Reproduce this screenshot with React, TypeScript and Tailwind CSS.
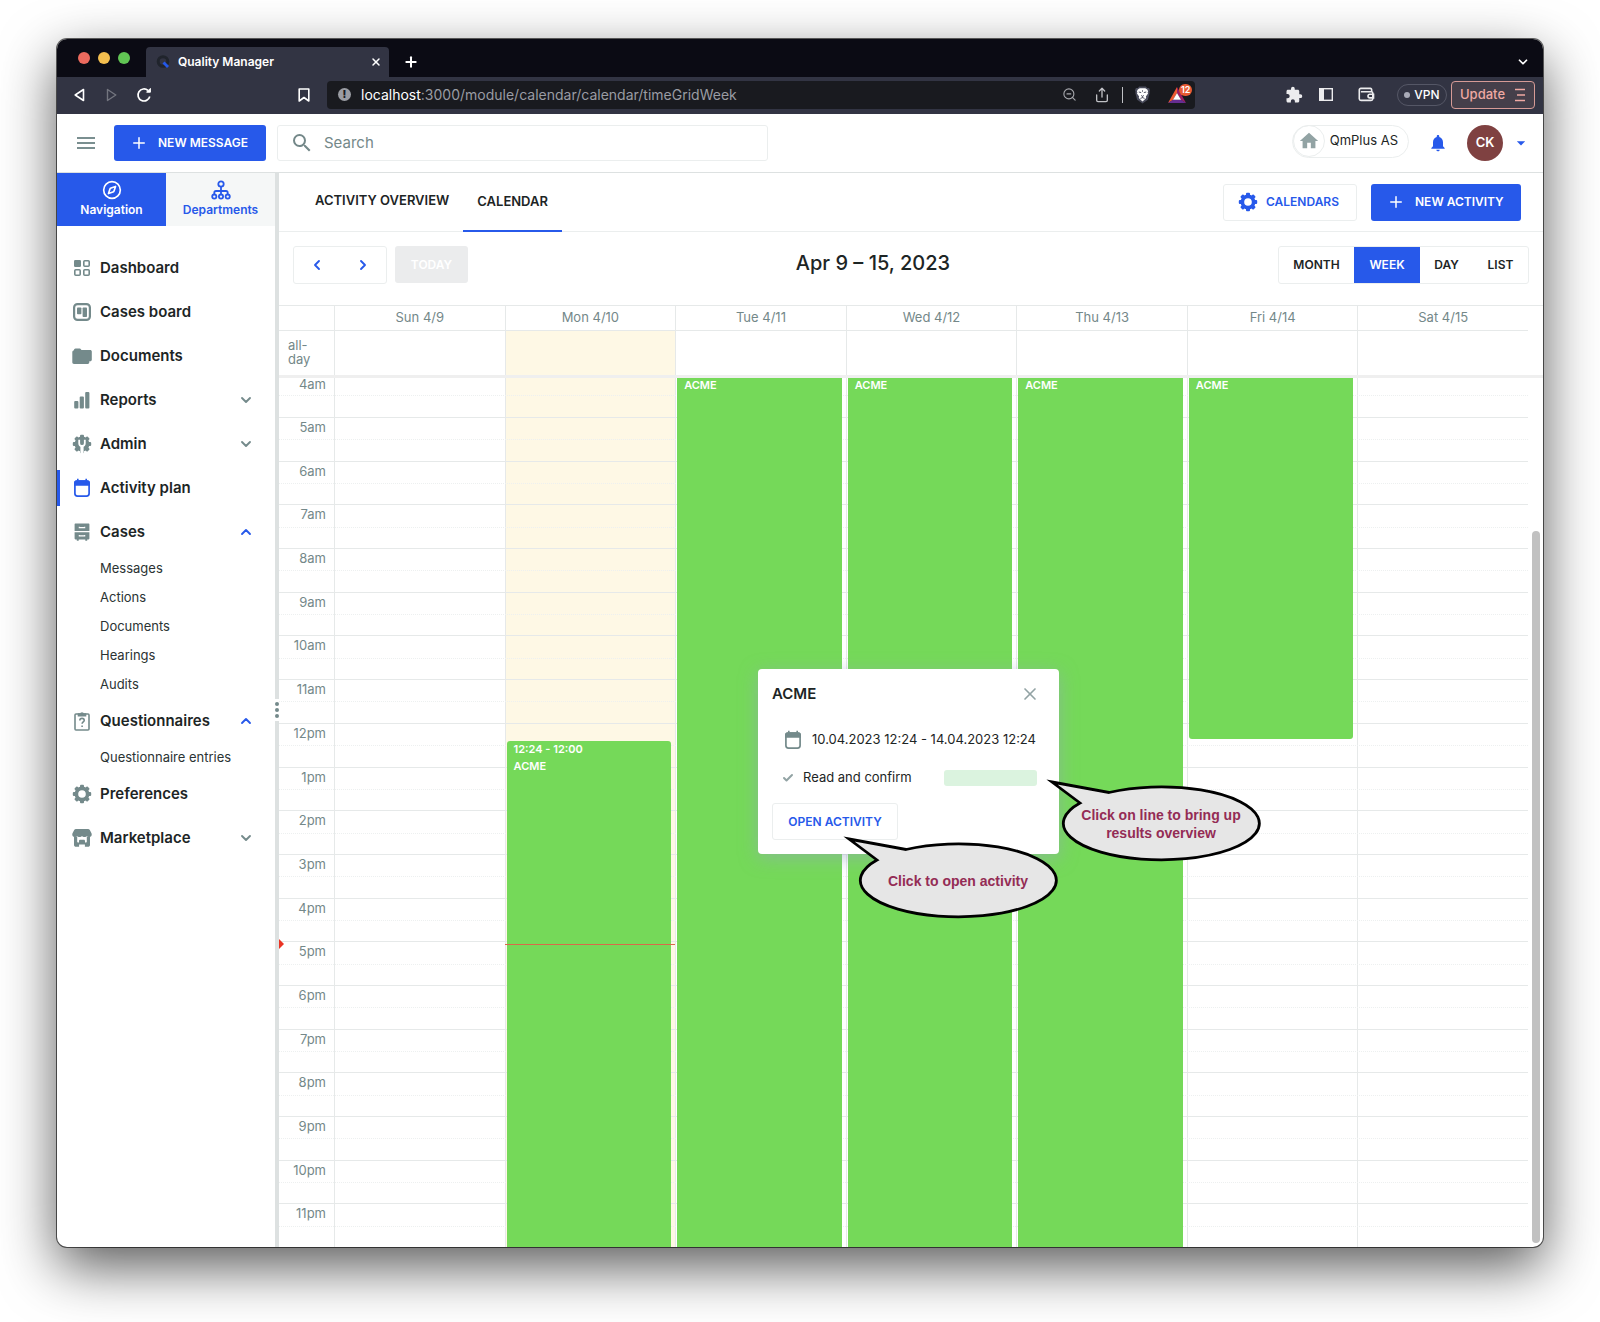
import React from 'react';
import { ChevronDown, ChevronLeft, ChevronRight, ChevronUp, Plus, X, Compass, Share, ZoomOut, Check } from 'lucide-react';
import { MdExtension, MdHome, MdNotifications, MdArrowDropDown, MdSearch } from 'react-icons/md';

type IconProps = { className?: string };

const DashboardIcon = ({ className }: IconProps) => (
  <svg viewBox="0 0 20 20" className={className} fill="none" stroke="currentColor" strokeWidth="1.6">
    <rect x="2" y="2" width="7" height="7" rx="1.2" fill="currentColor" stroke="none" />
    <rect x="11.8" y="2.8" width="5.4" height="5.4" rx="1" />
    <rect x="2.8" y="11.8" width="5.4" height="5.4" rx="1" />
    <rect x="11.8" y="11.8" width="5.4" height="5.4" rx="1" />
  </svg>
);

const BoardIcon = ({ className }: IconProps) => (
  <svg viewBox="0 0 20 20" className={className} fill="currentColor">
    <rect x="2.1" y="2.1" width="15.8" height="15.8" rx="3.4" fill="none" stroke="currentColor" strokeWidth="2.2" />
    <rect x="5" y="5.4" width="4.4" height="6.8" rx="0.8" />
    <rect x="10.6" y="5.4" width="4.4" height="9.6" rx="0.8" />
  </svg>
);

const FoldersIcon = ({ className }: IconProps) => (
  <svg viewBox="0 0 20 18" className={className} fill="currentColor">
    <path d="M3.5 1.5h4.6l1.4 1.6h8.7c.9 0 1.6.6 1.6 1.5v8.2c0 .9-.7 1.5-1.6 1.5h-.9v.9c0 1-.7 1.7-1.6 1.7H2c-1 0-1.7-.7-1.7-1.7V5.3c0-1 .6-1.7 1.5-1.7.2-1.2.8-2.1 1.7-2.1z" />
  </svg>
);

const BarsIcon = ({ className }: IconProps) => (
  <svg viewBox="0 0 20 20" className={className} fill="currentColor">
    <rect x="2.2" y="11" width="4.2" height="7.5" rx="1" />
    <rect x="7.7" y="6.5" width="4.2" height="12" rx="1" />
    <rect x="13.2" y="2" width="4.2" height="16.5" rx="1" />
  </svg>
);

const teeth = [0, 45, 90, 135, 180, 225, 270, 315];

const GearIcon = ({ className }: IconProps) => (
  <svg viewBox="0 0 20 20" className={className} fill="currentColor">
    <circle cx="10" cy="10" r="5.6" fill="none" stroke="currentColor" strokeWidth="3.6" />
    {teeth.map((angle) => (
      <rect key={angle} x="8" y=".8" width="4" height="3.4" rx="1" transform={`rotate(${angle} 10 10)`} />
    ))}
  </svg>
);

const AdminIcon = ({ className }: IconProps) => (
  <svg viewBox="0 0 20 20" className={className} fill="currentColor">
    <circle cx="10" cy="10" r="7.4" />
    {teeth.map((angle) => (
      <rect key={angle} x="8" y=".8" width="4" height="3.4" rx="1" transform={`rotate(${angle} 10 10)`} />
    ))}
    <path d="M7.2 5.8v3.4a2.8 2.8 0 0 0 5.6 0V5.800" fill="none" stroke="white" strokeWidth="1.8" />
    <path d="M8.400 11h3.200v9H8.400z" fill="white" />
  </svg>
);

const CalendarIcon = ({ className }: IconProps) => (
  <svg viewBox="0 0 18 20" className={className} fill="currentColor">
    <path d="M4 .8h1.6v2H4zM12.4.8H14v2h-1.6z" />
    <rect x="1.9" y="3.2" width="14.2" height="15" rx="2.6" fill="none" stroke="currentColor" strokeWidth="1.7" />
    <path d="M1 7.800V5a2.700 2.700 0 0 1 2.700-2.700h10.600A2.700 2.700 0 0 1 17 5v2.800z" />
  </svg>
);

const CabinetIcon = ({ className }: IconProps) => (
  <svg viewBox="0 0 18 20" className={className}>
    <path fill="currentColor" d="M2.300 1.500h13.400a.7.7 0 0 1 .7.700V9H1.600V2.200a.7.7 0 0 1 .7-.7zM1.600 10.200h14.800v6.400a.8.8 0 0 1-.8.8h-1.400v1.400h-1.900v-1.400H5.700v1.400H3.800v-1.400H2.400a.8.8 0 0 1-.8-.8z" />
    <path fill="none" stroke="white" strokeWidth="1.1" d="M6.300 4.700v.9h5.400v-.9M6.300 13v.9h5.400V13" />
  </svg>
);

const ClipboardIcon = ({ className }: IconProps) => (
  <svg viewBox="0 0 18 20" className={className} fill="none" stroke="currentColor" strokeWidth="1.6">
    <rect x="2" y="3" width="14" height="16" rx="1" />
    <path d="M5.500 4.600V3h2a1.600 1.600 0 0 1 3 0h2v1.600z" fill="currentColor" />
    <path d="M6.800 9.600c0-1.400 1-2.200 2.200-2.200s2.200.8 2.200 2c0 1.500-2.100 1.700-2.100 3.400M9.100 14.400v1.500" />
  </svg>
);

const StoreIcon = ({ className }: IconProps) => (
  <svg viewBox="0 0 20 19" className={className} fill="currentColor">
    <path d="M4 .5h12c.8 0 1.400.3 1.800 1l1.700 3.300c.7 1.900-.2 3.700-2 3.700-1.200 0-1.900-.5-2.500-1.100-.6.600-1.300 1.100-2.500 1.100S10.600 8 10 7.400C9.400 8 8.700 8.500 7.500 8.500S5.600 8 5 7.400c-.6.600-1.300 1.100-2.500 1.100C.7 8.500-.2 6.700.5 4.800L2.200 1.500C2.600.8 3.200.5 4 .5z" />
    <path d="M2 8h3.200v5.200c0 .5.300.8.800.8h1v-1.500c0-.8.600-1.300 1.300-1.300h3.400c.7 0 1.300.5 1.300 1.300V14h1c.5 0 .8-.3.8-.8V8H18v8.200c0 1.300-.8 2.100-2.100 2.100h-3V16H7.100v2.300h-3C2.800 18.300 2 17.500 2 16.200z" />
  </svg>
);

const DepartmentsIcon = ({ className }: IconProps) => (
  <svg viewBox="0 0 20 20" className={className} fill="none" stroke="currentColor" strokeWidth="1.8">
    <circle cx="10" cy="4" r="2.7" />
    <circle cx="3.3" cy="16.6" r="2.1" />
    <circle cx="10" cy="16.6" r="2.1" />
    <circle cx="16.7" cy="16.6" r="2.1" />
    <path d="M10 6.700v7.800M3.300 14.500v-1.800c0-1 .6-1.700 1.700-1.700h10c1.100 0 1.700.7 1.700 1.700v1.800" />
  </svg>
);

const WalletIcon = ({ className }: IconProps) => (
  <svg viewBox="0 0 18 16" className={className} fill="none" stroke="currentColor" strokeWidth="1.7">
    <path d="M14.500 5V2.800c0-.8-.5-1.300-1.300-1.300H3A1.700 1.700 0 0 0 1.300 3.200v9.300c0 1.100.7 1.800 1.800 1.800h10.800c1.100 0 1.800-.7 1.800-1.800V6.400c0-.9-.6-1.400-1.500-1.400H3" />
    <path d="M16.500 7.800h-4a1.900 1.900 0 0 0 0 3.800h4z" />
  </svg>
);

const LionIcon = ({ className }: IconProps) => (
  <svg viewBox="0 0 16 18" className={className}>
    <path fill="#4a4c5c" d="M4.500 0h7l1.500 1.500 2-.1L16 4l-.6 1.500.3 1.200-2 7.300L8 18l-5.700-4L.3 6.700l.3-1.200L0 4l1-2.600 2 .1z" />
    <path fill="white" d="M5 1.800h6l2 1.200 1 2-.6 1.300.5 1.200-2.300 3.200.4 1.500L8 15.800l-4-3.600.4-1.500L2.100 7.500l.5-1.200L2 5l1-2z" />
    <path fill="none" stroke="#4a4c5c" strokeWidth="1" d="M4 5.800l2.600.6M12 5.800l-2.600.6M8 4v1.500M6.500 9.500l1.500.9 1.500-.9M8 10.400v1.500M5.800 12.600L8 11.800l2.200.8" />
  </svg>
);

const Bubble = ({ className, children }: { className: string; children: React.ReactNode }) => (
  <div className={`absolute h-[88px] w-[220px] ${className}`}>
    <svg viewBox="0 0 220 88" className="absolute inset-0">
      <path d="M9 6 L66 16.500 A98 36.500 0 1 1 37 27 Z" fill="#e6e6e6" stroke="black" strokeWidth="2.8" strokeMiterlimit="10" />
    </svg>
    <div className="relative flex h-full items-center justify-center pt-2 pl-4 text-center font-['Liberation_Sans',sans-serif] text-sm leading-[18px] font-bold text-[#942c55]">
      <p>{children}</p>
    </div>
  </div>
);

const navItems = [
  { label: 'Dashboard', icon: DashboardIcon },
  { label: 'Cases board', icon: BoardIcon },
  { label: 'Documents', icon: FoldersIcon },
  { label: 'Reports', icon: BarsIcon, open: false },
  { label: 'Admin', icon: AdminIcon, open: false },
  { label: 'Activity plan', icon: CalendarIcon, active: true },
  { label: 'Cases', icon: CabinetIcon, open: true, children: ['Messages', 'Actions', 'Documents', 'Hearings', 'Audits'] },
  { label: 'Questionnaires', icon: ClipboardIcon, open: true, children: ['Questionnaire entries'] },
  { label: 'Preferences', icon: GearIcon },
  { label: 'Marketplace', icon: StoreIcon, open: false },
];

const days = ['Sun 4/9', 'Mon 4/10', 'Tue 4/11', 'Wed 4/12', 'Thu 4/13', 'Fri 4/14', 'Sat 4/15'];

const hours = [
  '5am', '6am', '7am', '8am', '9am', '10am', '11am', '12pm', '1pm', '2pm',
  '3pm', '4pm', '5pm', '6pm', '7pm', '8pm', '9pm', '10pm', '11pm',
];

const BrowserChrome = () => (
  <div className="text-white">
    <div className="flex h-[38px] items-center bg-[#0b0b14] px-[21px]">
      <div className="flex gap-2">
        <span className="size-3 rounded-full bg-[#ec6a5e]" />
        <span className="size-3 rounded-full bg-[#f4bf4f]" />
        <span className="size-3 rounded-full bg-[#61c554]" />
      </div>
      <div className="mt-2 ml-4 flex h-[30px] w-[243px] items-center rounded-t bg-[#323443] pr-[7px] pl-2.5">
        <svg viewBox="0 0 14 14" className="size-[14px]" fill="none">
          <circle cx="7" cy="6.500" r="4.800" stroke="#20242c" strokeWidth="3" />
          <path d="M7.500 7.500l4.500 4.500" stroke="#2458ea" strokeWidth="2.800" />
        </svg>
        <span className="ml-2 text-[12px] font-semibold">Quality Manager</span>
        <button aria-label="Close tab" className="ml-auto"><X className="size-3" strokeWidth={3} /></button>
      </div>
      <button aria-label="New tab" className="mt-2 ml-3.5"><Plus className="size-4" strokeWidth={3} /></button>
      <button aria-label="Tabs" className="mt-2 -mr-2 ml-auto"><ChevronDown className="size-3.5" strokeWidth={3} /></button>
    </div>

    <div className="flex h-[37px] items-center bg-[#323443] pr-2 pb-0.5 pl-[15px]">
      <button aria-label="Back">
        <svg viewBox="0 0 14 14" className="size-[14px]" fill="none" stroke="white" strokeWidth="1.600" strokeLinejoin="round"><path d="M11.500 1.500v11L3.200 7z" /></svg>
      </button>
      <button aria-label="Forward" className="ml-[18px]">
        <svg viewBox="0 0 14 14" className="size-[14px]" fill="none" stroke="#73757f" strokeWidth="1.400" strokeLinejoin="round"><path d="M3.500 1.500v11L11.800 7z" /></svg>
      </button>
      <button aria-label="Reload" className="ml-[18px]">
        <svg viewBox="0 0 16 16" className="size-4" fill="none" stroke="white" strokeWidth="1.700"><path d="M13.800 9.500A6 6 0 1 1 12 3.500" /><path d="M10.600 5.200h3.800V1.400z" fill="white" strokeWidth="1" /></svg>
      </button>
      <button aria-label="Bookmark" className="ml-36">
        <svg viewBox="0 0 12 14" className="mx-0.5 h-[14px] w-3" fill="none" stroke="white" strokeWidth="1.600" strokeLinejoin="round"><path d="M1.200 1h9.600v12L6 9.500 1.200 13z" /></svg>
      </button>
      <div className="ml-[15px] flex h-7 w-[868px] items-center rounded bg-[#191a1f] pl-[11px]">
        <span className="flex size-[13px] items-center justify-center rounded-full bg-[#9a9ca3] text-[10px] font-black text-[#191a1f]">!</span>
        <span className="ml-2.5 text-sm text-[#9a9ca3]"><span className="text-white">localhost</span>:3000/module/calendar/calendar/timeGridWeek</span>
        <ZoomOut className="ml-auto size-[15px] text-[#a6a7ac]" strokeWidth={1.8} />
        <Share className="ml-[17px] size-4 text-[#c0c1c5]" />
        <span className="ml-3 h-4 w-px bg-[#c0c1c5]" />
        <LionIcon className="ml-3 h-[18px] w-[15px]" />
        <span className="relative ml-[18px] flex w-[27px]">
          <svg viewBox="0 0 18 16" className="h-4 w-[18px]">
            <path fill="#ee5a31" d="M9 0L0 16l5-3 4-7z" />
            <path fill="#9e1f63" d="M9 0l9 16-5-3-4-7z" />
            <path fill="#662d91" d="M0 16h18l-5-3.200H5z" />
            <path fill="white" d="M9 6l4 6.800H5z" />
          </svg>
          <span className="absolute -top-[3px] left-[11px] rounded-md bg-[#ea5b34] px-0.5 text-[9px] leading-3 font-semibold">12</span>
        </span>
      </div>
      <div className="ml-auto flex items-center text-[#ececee]">
        <MdExtension className="size-[18px]" />
        <svg viewBox="0 0 14 13" className="ml-4 h-[13px] w-[14px]"><rect x=".7" y=".7" width="12.600" height="11.600" fill="none" stroke="currentColor" strokeWidth="1.400" /><path d="M1 1h4v11H1z" fill="currentColor" /></svg>
        <WalletIcon className="ml-[25px] h-[15px] w-[17px]" />
        <button className="ml-[22px] flex h-[22px] w-[50px] items-center justify-center gap-1 rounded-full border border-[#555766] text-[12px] font-medium text-white">
          <span className="size-[6px] rounded-full bg-[#a9abb8]" />VPN
        </button>
        <button className="ml-1 flex h-7 w-[84px] items-center justify-between rounded border border-[#d69b96] bg-[#453f4a] px-2 text-[13px] font-medium text-[#efa9a2]">
          Update
          <svg viewBox="0 0 10 14" className="mr-px h-[14px] w-[10px]" stroke="currentColor" strokeWidth="1.300"><path d="M0 1.500h10M2 7h8M0 12.500h10" /></svg>
        </button>
      </div>
    </div>
  </div>
);

const Header = () => (
  <header className="flex h-[59px] items-center border-b border-[#dde1e1] pr-3 pl-5">
    <button aria-label="Menu" className="flex w-[18px] flex-col gap-[3px]">
      <span className="h-[2px] bg-[#7a8f90]" />
      <span className="h-[2px] bg-[#7a8f90]" />
      <span className="h-[2px] bg-[#7a8f90]" />
    </button>
    <button className="ml-[19px] flex h-9 w-[152px] items-center rounded-[3px] bg-[#2759ea] pl-4 text-[12px] font-semibold text-white">
      <Plus className="mr-2.5 size-[18px]" />NEW MESSAGE
    </button>
    <label className="ml-[11px] flex h-9 w-[491px] items-center rounded-[3px] border border-[#ebeeee] pl-3 text-[#748889]">
      <MdSearch className="size-6 shrink-0" />
      <input aria-label="Search" placeholder="Search" className="ml-2.5 w-full text-[15px] outline-none placeholder:text-[#748889]" />
    </label>
    <div className="-mt-1 ml-auto flex h-[33px] items-center rounded-full border border-[#ebeeee] pr-2.5 text-[13px] text-[#1d2525]">
      <span className="mr-[5px] flex size-8 items-center justify-center rounded-full border border-[#ebeeee]"><MdHome className="size-[22px] text-[#92a3a4]" /></span>
      QmPlus AS
    </div>
    <button aria-label="Notifications" className="ml-[19px] text-[#2759ea]"><MdNotifications className="size-5" /></button>
    <span className="ml-[19px] flex size-9 items-center justify-center rounded-full bg-[#7f4141] text-[13px] font-semibold text-white">CK</span>
    <button aria-label="Account" className="ml-2 text-[#2759ea]"><MdArrowDropDown className="size-5" /></button>
  </header>
);

const Sidebar = () => (
  <aside className="flex w-[222px] shrink-0">
    <div className="flex-1">
      <div className="grid h-[53px] grid-cols-2 text-[12px] font-semibold">
        <button className="flex flex-col items-center justify-center gap-px bg-[#2759ea] text-white">
          <Compass className="size-5" />Navigation
        </button>
        <button className="flex flex-col items-center justify-center gap-px bg-[#f5f7f7] text-[#2759ea]">
          <DepartmentsIcon className="size-5" />Departments
        </button>
      </div>
      <nav className="pt-5">
        {navItems.map(({ label, icon: Icon, open, active, children }) => (
          <div key={label}>
            <a href="#" className="relative flex h-11 items-center pr-[21px] pl-[15px] text-[#1d2525]">
              {active && <span className="absolute left-0 h-9 w-[3px] bg-[#2759ea]" />}
              <Icon className={active ? 'size-5 text-[#2759ea]' : 'size-5 text-[#748a8b]'} />
              <span className="ml-2 text-[15px] font-semibold">{label}</span>
              {open === true && <ChevronUp className="ml-auto size-4 text-[#2759ea]" strokeWidth={2.8} />}
              {open === false && <ChevronDown className="ml-auto size-4 text-[#748a8b]" strokeWidth={2.8} />}
            </a>
            {children?.map((child) => (
              <a key={child} href="#" className="flex h-[29px] items-center pl-[43px] text-[13px] text-[#2b3333]">{child}</a>
            ))}
          </div>
        ))}
      </nav>
    </div>
    <div className="relative w-1 bg-[#dde1e1]">
      <div className="absolute top-[526px] flex h-[22px] w-1 flex-col items-center justify-center gap-0.5 bg-white">
        <span className="size-1 rounded-full bg-[#748a8b]" />
        <span className="size-1 rounded-full bg-[#748a8b]" />
        <span className="size-1 rounded-full bg-[#748a8b]" />
      </div>
    </div>
  </aside>
);

const ActivityPopup = () => (
  <div className="absolute top-[291px] left-[479px] w-[301px] rounded bg-white pb-[14px] text-[#1d2525] shadow-[0_4px_18px_rgba(150,165,190,0.55)]">
    <div className="flex items-center justify-between pt-[13px] pr-[19px] pl-[14px]">
      <h3 className="text-[15px] leading-6 font-semibold">ACME</h3>
      <button aria-label="Close"><X className="size-5 text-[#92a3a4]" /></button>
    </div>
    <div className="mt-[22px] flex h-6 items-center pl-[26px] text-[13px]">
      <CalendarIcon className="mr-2.5 h-5 w-[18px] text-[#748a8b]" />10.04.2023 12:24 - 14.04.2023 12:24
    </div>
    <div className="mt-[14px] flex h-6 items-center pr-[22px] pl-6 text-[13px]">
      <Check className="mr-[9px] size-3 text-[#92a3a4]" strokeWidth={4} />
      Read and confirm
      <span className="ml-auto h-4 w-[93px] rounded-[3px] bg-[#dbf3df]" />
    </div>
    <button className="mt-[13px] ml-[14px] h-[37px] w-[126px] rounded-[3px] border border-[#ebeeee] text-[12px] font-semibold text-[#2759ea]">OPEN ACTIVITY</button>
  </div>
);

const WeekGrid = () => (
  <div className="flex min-h-0 flex-1 flex-col border-t border-[#e6e9e9] text-[13px] text-[#748889]">
    <div className="grid h-[25px] grid-cols-[55px_repeat(7,1fr)] pr-[15px]">
      <div className="border-b border-[#e6e9e9]" />
      {days.map((day) => (
        <div key={day} className="flex items-center justify-center border-b border-l border-[#e6e9e9]">{day}</div>
      ))}
    </div>
    <div className="grid h-11 grid-cols-[55px_repeat(7,1fr)] pr-[15px]">
      <div className="pt-[7px] pl-[9px] leading-[14px]">all-<br />day</div>
      {days.map((day) => (
        <div key={day} className={day === 'Mon 4/10' ? 'border-l border-[#e6e9e9] bg-[#fef8e5]' : 'border-l border-[#e6e9e9]'} />
      ))}
    </div>
    <div className="h-[3px] bg-[#efefef]" />

    <div className="relative min-h-0 flex-1 pr-[15px]">
      {/* day columns sit below the hour lines */}
      <div className="absolute inset-y-0 right-[15px] left-0 grid grid-cols-[55px_repeat(7,1fr)]">
        <div />
        {days.map((day) => (
          <div key={day} className={day === 'Mon 4/10' ? 'border-l border-[#e6e9e9] bg-[#fef8e5]' : 'border-l border-[#e6e9e9]'} />
        ))}
      </div>
      <div className="relative flex h-full flex-col">
        <div className="flex h-[39px] flex-col">
          <div className="h-[17px] w-[47px] text-right leading-3">4am</div>
          <div className="flex-1 border-t border-dotted border-[#edf0f0]" />
        </div>
        {hours.map((hour) => (
          <div key={hour} className="flex min-h-0 flex-1 flex-col border-t border-[#e6e9e9]">
            <div className="h-1/2 w-[47px] text-right leading-[18px]">{hour}</div>
            <div className="h-1/2 border-t border-dotted border-[#edf0f0]" />
          </div>
        ))}
      </div>

      {/* events */}
      <div className="absolute inset-y-0 right-[15px] left-0 grid grid-cols-[55px_repeat(7,1fr)] text-[11px] leading-[17px] font-semibold text-white">
        <div className="relative">
          <span className="absolute top-[561px] left-0 border-y-[5px] border-l-[5px] border-y-transparent border-l-[#ea3323]" />
        </div>
        <div />
        <div className="relative pt-[363px] pr-1 pl-0.5">
          <div className="h-full rounded-t-[3px] bg-[#75d959] px-[7px]">
            <div>12:24 - 12:00</div>
            <div>ACME</div>
          </div>
          <div className="absolute inset-x-0 top-[566px] h-px bg-[#d9694a]" />
        </div>
        {['Tue', 'Wed', 'Thu'].map((day) => (
          <div key={day} className="pr-1 pl-0.5">
            <div className="h-full bg-[#75d959] px-[7px] leading-[14px]">ACME</div>
          </div>
        ))}
        <div className="pr-1 pl-0.5">
          <div className="h-[361px] rounded-b-[3px] bg-[#75d959] px-[7px] leading-[14px]">ACME</div>
        </div>
      </div>

      <div className="absolute top-[153px] right-[3px] bottom-1 w-2 rounded-full bg-[#c1c1c1]" />

      <ActivityPopup />
      <Bubble className="top-[398px] left-[764px]">Click on line to bring up<br />results overview</Bubble>
      <Bubble className="top-[455px] left-[561px]">Click to open activity</Bubble>
    </div>
  </div>
);

const CalendarPage = () => (
  <main className="flex min-w-0 flex-1 flex-col">
    <div className="flex h-[59px] items-center justify-between border-b border-[#ebeeee] px-[22px]">
      <div className="flex self-stretch text-[13px] font-semibold text-[#1d2525]">
        <button className="border-b-2 border-transparent px-[14px]">ACTIVITY OVERVIEW</button>
        <button className="-mb-px border-b-2 border-[#2759ea] px-[14px]">CALENDAR</button>
      </div>
      <div className="flex gap-[14px] text-[12px] font-semibold">
        <button className="flex h-[37px] w-[134px] items-center rounded-[3px] border border-[#ebeeee] pl-[14px] text-[#2759ea]">
          <GearIcon className="mr-2 size-5" />CALENDARS
        </button>
        <button className="flex h-[37px] w-[150px] items-center rounded-[3px] bg-[#2759ea] pl-4 text-white">
          <Plus className="mr-2.5 size-[18px]" />NEW ACTIVITY
        </button>
      </div>
    </div>

    <div className="flex h-[73px] items-start justify-between px-[14px] pt-[14px]">
      <div className="flex gap-2">
        <div className="flex h-[38px] w-[94px] rounded-[3px] border border-[#ebeeee] text-[#2759ea]">
          <button aria-label="Previous week" className="flex flex-1 items-center justify-center"><ChevronLeft className="size-4" strokeWidth={2.8} /></button>
          <button aria-label="Next week" className="flex flex-1 items-center justify-center"><ChevronRight className="size-4" strokeWidth={2.8} /></button>
        </div>
        <button disabled className="h-[37px] w-[73px] rounded-[3px] bg-[#ebeced] text-[12px] font-semibold text-white">TODAY</button>
      </div>
      <h2 className="text-xl leading-[34px] font-medium text-[#1d2525]">Apr 9 – 15, 2023</h2>
      <div className="flex h-[38px] rounded-[3px] border border-[#ebeeee] text-[12px] font-semibold text-[#1d2525]">
        <button className="w-[75px]">MONTH</button>
        <button className="w-[66px] bg-[#2759ea] text-white">WEEK</button>
        <button className="w-[53px]">DAY</button>
        <button className="w-[55px]">LIST</button>
      </div>
    </div>

    <WeekGrid />
  </main>
);

export default function App() {
  return (
    <div className="flex h-screen bg-white px-[57px] pt-[39px] pb-[75px] font-[Inter,sans-serif]">
      <div className="flex min-w-0 flex-1 flex-col overflow-hidden rounded-[10px] bg-white shadow-[0_0_0_1px_rgba(0,0,0,0.6),0_20px_55px_rgba(0,0,0,0.65)]">
        <BrowserChrome />
        <Header />
        <div className="flex min-h-0 flex-1">
          <Sidebar />
          <CalendarPage />
        </div>
      </div>
    </div>
  );
}
